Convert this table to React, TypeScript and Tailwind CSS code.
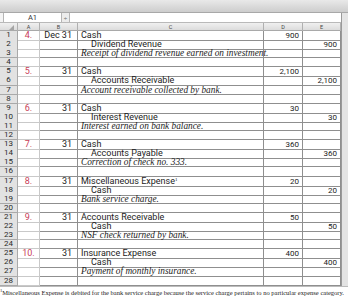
import React from "react";

type Row = { a?: string; b?: string; c?: string; kind?: "main" | "sub" | "note"; sup?: boolean; d?: string; e?: string };

const rows: Row[] = [
  { a: "4.", b: "Dec 31", c: "Cash", kind: "main", d: "900" },
  { c: "Dividend Revenue", kind: "sub", e: "900" },
  { c: "Receipt of dividend revenue earned on investment.", kind: "note" },
  {},
  { a: "5.", b: "31", c: "Cash", kind: "main", d: "2,100" },
  { c: "Accounts Receivable", kind: "sub", e: "2,100" },
  { c: "Account receivable collected by bank.", kind: "note" },
  {},
  { a: "6.", b: "31", c: "Cash", kind: "main", d: "30" },
  { c: "Interest Revenue", kind: "sub", e: "30" },
  { c: "Interest earned on bank balance.", kind: "note" },
  {},
  { a: "7.", b: "31", c: "Cash", kind: "main", d: "360" },
  { c: "Accounts Payable", kind: "sub", e: "360" },
  { c: "Correction of check no. 333.", kind: "note" },
  {},
  { a: "8.", b: "31", c: "Miscellaneous Expense", sup: true, kind: "main", d: "20" },
  { c: "Cash", kind: "sub", e: "20" },
  { c: "Bank service charge.", kind: "note" },
  {},
  { a: "9.", b: "31", c: "Accounts Receivable", kind: "main", d: "50" },
  { c: "Cash", kind: "sub", e: "50" },
  { c: "NSF check returned by bank.", kind: "note" },
  {},
  { a: "10.", b: "31", c: "Insurance Expense", kind: "main", d: "400" },
  { c: "Cash", kind: "sub", e: "400" },
  { c: "Payment of monthly insurance.", kind: "note" },
  {},
];

const sans = "font-['Roboto','Liberation_Sans',sans-serif]";
const serif = "font-['Liberation_Serif','DejaVu_Serif',serif]";
const cols = "grid grid-cols-[18px_22px_38px_186px_39px_38px]";

export default function App() {
  return (
    <div className="w-[348px] h-[300px] bg-white overflow-hidden flex flex-col">
      {/* title bar */}
      <div className="h-[13px] shrink-0 bg-gradient-to-b from-[#e9e9e9] to-[#cdcdcd] border-b border-[#a8a8a8]" />

      <div className="flex shrink-0">
        <div className="w-[341px] flex flex-col">
          {/* formula bar */}
          <div className="h-[10px] flex items-stretch bg-[#f4f4f4] border-b border-[#b9b9b9] pl-[3px]">
            <div className={`w-[59px] bg-white border-x border-[#b5b5b5] flex items-center justify-center text-[7.5px] leading-none text-[#333] ${sans}`}>A1</div>
            <div className={`w-[8px] bg-[#ececec] border-r border-[#b5b5b5] flex items-center justify-center text-[6px] leading-none text-[#555] ${sans}`}>÷</div>
            <div className="flex-1 bg-white" />
          </div>

          {/* column headers */}
          <div className={`${cols} h-[8px] bg-gradient-to-b from-[#f0f0f0] to-[#dcdcdc] border-b border-[#a9a9a9] text-[5.5px] leading-[8px] text-[#444] ${sans}`}>
            <div className="border-r border-[#b0b0b0] relative">
              <svg className="absolute left-[9px] top-[2px]" width="5" height="5" viewBox="0 0 5 5">
                <polygon points="5,0 5,5 0,5" fill="#a5a5a5" />
              </svg>
            </div>
            {["A", "B", "C", "D", "E"].map((l) => (
              <div key={l} className="border-r border-[#b0b0b0] text-center">{l}</div>
            ))}
          </div>

          {/* grid rows */}
          {rows.map((r, i) => (
            <div key={i} className={`${cols} h-[9.1px] text-[9px] leading-[9px] text-[#1c1c1c]`}>
              <div className={`bg-[#e2e2e2] border-r border-b border-[#a9a9a9] text-center text-[8px] leading-[8px] text-[#2a2a2a] ${sans}`}>{i + 1}</div>
              <div className={`border-r border-b border-[#c9c9c9] text-center text-[#c94058] ${sans}`}>{r.a}</div>
              <div className={`border-r border-b border-[#8f8f8f] text-right pr-[5px] ${sans}`}>{r.b}</div>
              <div className="border-r border-b border-[#8f8f8f] relative overflow-visible">
                {r.kind === "main" && (
                  <span className={`absolute left-[3px] top-0 whitespace-nowrap ${sans}`}>
                    {r.c}
                    {r.sup && <sup className={`text-[5px] ${serif}`}>1</sup>}
                  </span>
                )}
                {r.kind === "sub" && (
                  <span className={`absolute left-[13px] top-0 whitespace-nowrap ${sans}`}>{r.c}</span>
                )}
                {r.kind === "note" && (
                  <span className={`absolute left-[3px] top-0 whitespace-nowrap italic text-[9.3px] leading-[9px] ${serif}`}>{r.c}</span>
                )}
              </div>
              <div className={`border-r border-b border-[#8f8f8f] text-right pr-[3px] text-[8px] ${sans}`}>{r.d}</div>
              <div className={`border-r border-b border-[#8f8f8f] text-right pr-[3px] text-[8px] ${sans}`}>{r.e}</div>
            </div>
          ))}
        </div>
        {/* right window edge */}
        <div className="w-[7px] bg-[#e4e4e4] border-l border-[#9a9a9a]" />
      </div>

      {/* footnote */}
      <div className={`flex-1 pt-[2px] whitespace-nowrap text-[6.5px] leading-[7px] text-[#222] border-t border-[#bcbcbc] ${serif}`}>
        <sup className="text-[4.5px]">1</sup>Miscellaneous Expense is debited for the bank service charge because the service charge pertains to no particular expense category.
      </div>
    </div>
  );
}
